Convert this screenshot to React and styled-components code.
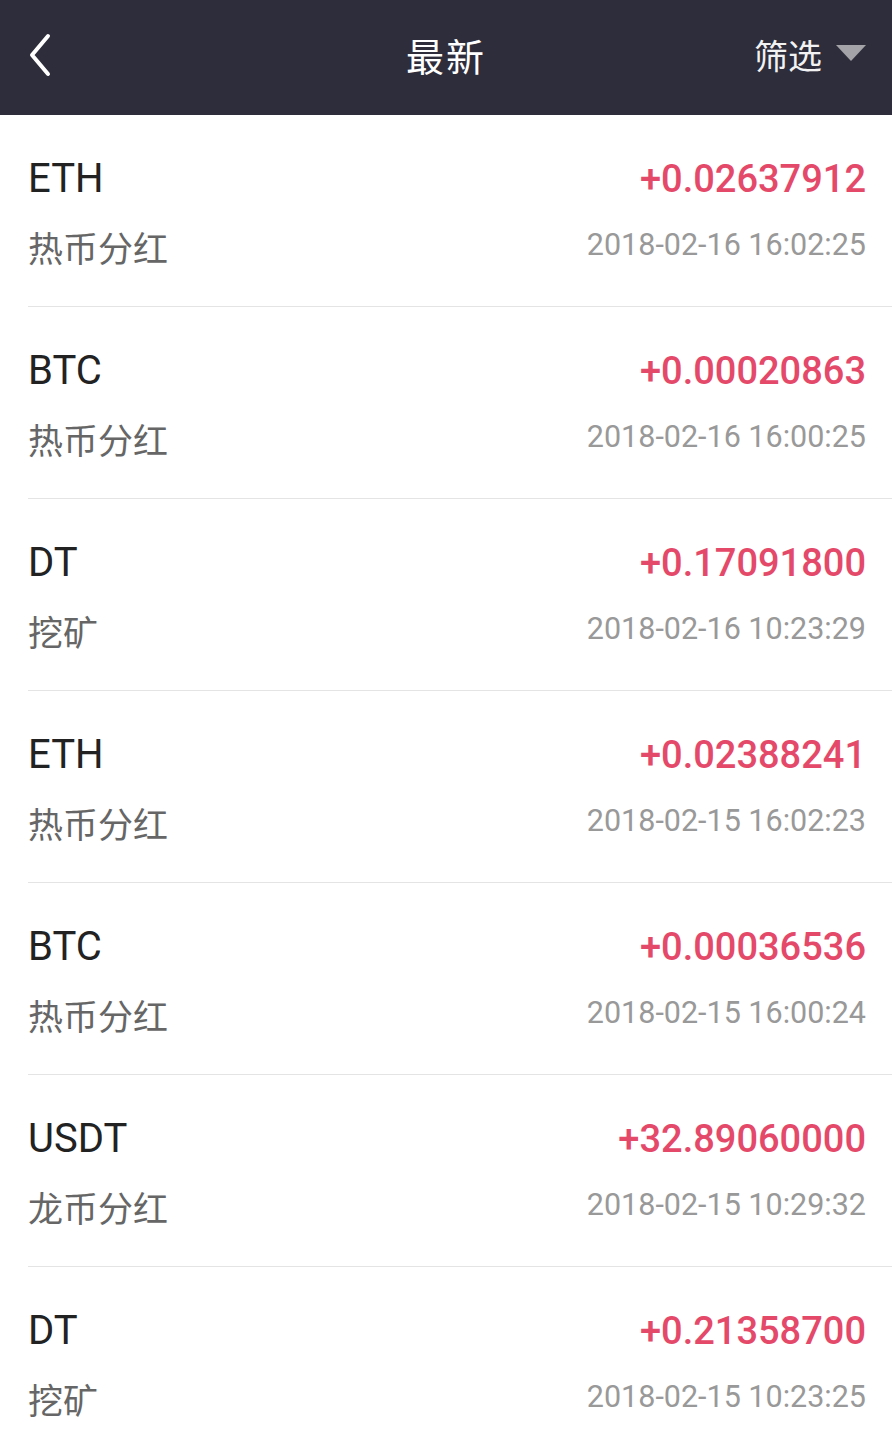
import React from "react"
import styled, { createGlobalStyle } from "styled-components"

const records = [
  { coin: "ETH", type: "热币分红", amount: "+0.02637912", time: "2018-02-16 16:02:25" },
  { coin: "BTC", type: "热币分红", amount: "+0.00020863", time: "2018-02-16 16:00:25" },
  { coin: "DT", type: "挖矿", amount: "+0.17091800", time: "2018-02-16 10:23:29" },
  { coin: "ETH", type: "热币分红", amount: "+0.02388241", time: "2018-02-15 16:02:23" },
  { coin: "BTC", type: "热币分红", amount: "+0.00036536", time: "2018-02-15 16:00:24" },
  { coin: "USDT", type: "龙币分红", amount: "+32.89060000", time: "2018-02-15 10:29:32" },
  { coin: "DT", type: "挖矿", amount: "+0.21358700", time: "2018-02-15 10:23:25" },
]

const GlobalStyle = createGlobalStyle`
  html, body {
    margin: 0;
    padding: 0;
    background: #fff;
  }
  body {
    font-family: Roboto, "Noto Sans CJK SC", sans-serif;
    overflow: hidden;
  }
`

const Page = styled.div`
  width: 892px;
  height: 1438px;
  overflow: hidden;
  background: #fff;
`

const Header = styled.header`
  position: relative;
  display: flex;
  align-items: center;
  justify-content: center;
  height: 115px;
  padding-bottom: 6px;
  box-sizing: border-box;
  background: #2e2d3b;
  color: #fff;
`

const Back = styled.div`
  position: absolute;
  left: 26px;
  top: 33px;
  width: 32px;
  height: 44px;
  display: flex;
  align-items: center;
`

const Title = styled.h1`
  margin: 0;
  font-family: "Noto Sans CJK SC", sans-serif;
  font-weight: 400;
  font-size: 38px;
  letter-spacing: 2px;
`

const Filter = styled.div`
  position: absolute;
  right: 26px;
  top: 0;
  height: 115px;
  display: flex;
  align-items: center;
  gap: 14px;
  font-family: "Noto Sans CJK SC", sans-serif;
  font-size: 34px;
  color: #f2f2f2;
  padding-bottom: 6px;
  box-sizing: border-box;
`

const Caret = styled.span`
  width: 0;
  height: 0;
  border-left: 15px solid transparent;
  border-right: 15px solid transparent;
  border-top: 16px solid #a3a3a8;
  margin-top: -4px;
`

const List = styled.ul`
  margin: 0;
  padding: 0;
  list-style: none;
`

const Row = styled.li`
  margin-left: 28px;
  padding: 41px 26px 0 0;
  height: 192px;
  box-sizing: border-box;
  border-bottom: 1px solid #e4e4e4;
  display: flex;
  flex-direction: column;
  gap: 25px;
`

const Line = styled.div`
  display: flex;
  justify-content: space-between;
  align-items: ${(p) => (p.sub ? "center" : "baseline")};
  height: 46px;
  line-height: 46px;
`

const Coin = styled.span`
  font-size: 40px;
  color: #222;
`

const Amount = styled.span`
  font-size: 38px;
  font-weight: 500;
  color: #e5496a;
`

const Type = styled.span`
  font-family: "Noto Sans CJK SC", sans-serif;
  font-size: 35px;
  padding-bottom: 6px;
  color: #666;
`

const Time = styled.span`
  font-size: 30.5px;
  line-height: 36px;
  padding-bottom: 10px;
  color: #999;
`

const App = () => {
  return (
    <Page>
      <GlobalStyle />
      <Header>
        <Back>
          <svg width="28" height="44" viewBox="0 0 28 44">
            <path d="M22 3 L6 22 L22 41" fill="none" stroke="#fff" strokeWidth="4" strokeLinecap="round" strokeLinejoin="round" />
          </svg>
        </Back>
        <Title>最新</Title>
        <Filter>
          <span>筛选</span>
          <Caret />
        </Filter>
      </Header>
      <List>
        {records.map((r, i) => (
          <Row key={i}>
            <Line>
              <Coin>{r.coin}</Coin>
              <Amount>{r.amount}</Amount>
            </Line>
            <Line sub>
              <Type>{r.type}</Type>
              <Time>{r.time}</Time>
            </Line>
          </Row>
        ))}
      </List>
    </Page>
  )
}

export default App
